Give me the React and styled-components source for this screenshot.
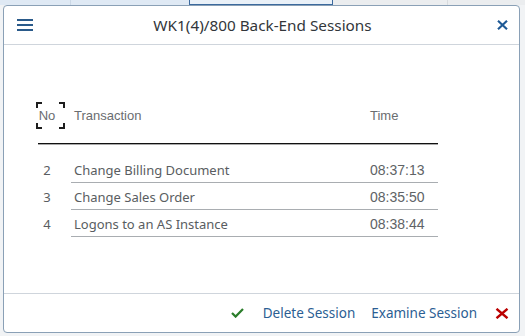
import React from "react";
import styled, { createGlobalStyle } from "styled-components";

const Global = createGlobalStyle`
  html, body { margin: 0; padding: 0; }
  body {
    background: #f1f3f5;
    font-family: "Noto Sans", "Open Sans", Arial, sans-serif;
    -webkit-font-smoothing: antialiased;
  }
`;

const Page = styled.div`
  width: 525px;
  height: 336px;
  display: flex;
  flex-direction: column;
  overflow: hidden;
  background: #f1f3f5;
`;

const TopStrip = styled.div`
  height: 5px;
  display: flex;
  flex-shrink: 0;
`;

const StripCell = styled.div`
  width: ${(p) => p.$w}px;
  flex: ${(p) => (p.$grow ? 1 : "none")};
  background: ${(p) => p.$bg};
  box-sizing: border-box;
  border-right: 1px solid ${(p) => p.$sep || "transparent"};
  ${(p) =>
    p.$active &&
    `border: 1px solid #3c6a9e; border-top: none; background: #eaf1f8;`}
`;

const Dialog = styled.div`
  flex: 1;
  margin: 0 5px 3px 3px;
  background: #fff;
  border: 1px solid #8aa0b6;
  border-radius: 4px;
  display: flex;
  flex-direction: column;
  overflow: hidden;
`;

const Header = styled.header`
  height: 38px;
  flex-shrink: 0;
  border-bottom: 1px solid #cfd5dc;
  display: grid;
  grid-template-columns: 1fr auto 1fr;
  align-items: center;
  padding: 0 11px 0 13px;
`;

const IconButton = styled.button`
  border: none;
  background: none;
  padding: 0;
  width: ${(p) => p.$w}px;
  height: ${(p) => p.$h}px;
  display: flex;
  justify-self: ${(p) => p.$align};
  cursor: pointer;
  svg { display: block; }
`;

const Title = styled.h1`
  margin: 0;
  font-size: 15.3px;
  font-weight: 400;
  color: #32363a;
  white-space: nowrap;
`;

const Content = styled.div`
  flex: 1;
  padding: 56px 0 0 32px;
`;

const Table = styled.div`
  width: 402px;
`;

const HeadRow = styled.div`
  display: grid;
  grid-template-columns: 35px 1fr 68px;
  height: 29px;
  align-items: center;
  font-family: "Liberation Sans", Arial, sans-serif;
  font-size: 13px;
  color: #6a6d70;
`;

const HeadCell = styled.div`
  position: relative;
  height: 100%;
  display: flex;
  align-items: center;
  justify-content: ${(p) => (p.$center ? "center" : "flex-start")};
  padding: ${(p) => p.$pad || "0"};
`;

const FocusFrame = styled.span`
  position: absolute;
  left: 0;
  top: 1px;
  width: 29px;
  height: 27px;
  pointer-events: none;
  --c: #1d1d1d;
  background:
    linear-gradient(var(--c), var(--c)) left top / 6px 2px,
    linear-gradient(var(--c), var(--c)) left top / 2px 6px,
    linear-gradient(var(--c), var(--c)) right top / 6px 2px,
    linear-gradient(var(--c), var(--c)) right top / 2px 6px,
    linear-gradient(var(--c), var(--c)) left bottom / 6px 2px,
    linear-gradient(var(--c), var(--c)) left bottom / 2px 6px,
    linear-gradient(var(--c), var(--c)) right bottom / 6px 2px,
    linear-gradient(var(--c), var(--c)) right bottom / 2px 6px;
  background-repeat: no-repeat;
`;

const HeadRule = styled.div`
  height: 1px;
  margin: 13px 0 12px 2px;
  background: #111;
  box-shadow: 0 0.5px 0 #555;
`;

const Row = styled.div`
  display: grid;
  grid-template-columns: 35px 1fr 68px;
  height: 27px;
  font-size: 13px;
  color: #595d61;
`;

const Cell = styled.div`
  display: flex;
  align-items: center;
  padding: ${(p) => p.$pad || "0"};
  padding-top: 2px;
  justify-content: ${(p) => (p.$center ? "center" : "flex-start")};
  border-bottom: ${(p) => (p.$lined ? "1px solid #a9adb1" : "1px solid transparent")};
  white-space: nowrap;
  font-family: ${(p) =>
    p.$mono ? `"Liberation Sans", Arial, sans-serif` : "inherit"};
  font-size: ${(p) => (p.$mono ? "14px" : "inherit")};
  color: ${(p) => (p.$mono ? "#606366" : "inherit")};
`;

const Footer = styled.footer`
  height: 38px;
  flex-shrink: 0;
  border-top: 1px solid #cfd5dc;
  display: flex;
  justify-content: flex-end;
  align-items: center;
  padding-right: 10px;
  gap: 16px;
`;

const TextButton = styled.button`
  border: none;
  background: none;
  padding: 0;
  font-family: "Noto Sans", "Open Sans", Arial, sans-serif;
  font-size: 13.5px;
  color: #2b5e93;
  cursor: pointer;
  white-space: nowrap;
`;

const FooterIcon = styled.button`
  border: none;
  background: none;
  padding: 0;
  display: flex;
  margin-top: ${(p) => p.$mt || 0}px;
  margin-right: ${(p) => p.$mr || 0}px;
  margin-left: ${(p) => p.$ml || 0}px;
  svg { display: block; }
`;

const rows = [
  { no: 2, tx: "Change Billing Document", time: "08:37:13" },
  { no: 3, tx: "Change Sales Order", time: "08:35:50" },
  { no: 4, tx: "Logons to an AS Instance", time: "08:38:44" },
];

export default function App() {
  return (
    <>
      <Global />
      <Page>
        <TopStrip>
          <StripCell $w={71} $bg="#dfe9f4" $sep="#cbd8e6" />
          <StripCell $w={118} $bg="#dfe9f4" />
          <StripCell $w={144} $active />
          <StripCell $w={115} $bg="#ebedef" $sep="#d8dbde" />
          <StripCell $grow $bg="#ebedef" />
        </TopStrip>
        <Dialog>
          <Header>
            <IconButton $w={16} $h={12} $align="start" aria-label="Menu">
              <svg width="16" height="12" viewBox="0 0 16 12">
                <rect x="0" y="0" width="16" height="2" fill="#2a5a8a" />
                <rect x="0" y="5" width="16" height="2" fill="#2a5a8a" />
                <rect x="0" y="10" width="16" height="2" fill="#2a5a8a" />
              </svg>
            </IconButton>
            <Title>WK1(4)/800 Back-End Sessions</Title>
            <IconButton $w={11} $h={10} $align="end" aria-label="Close">
              <svg width="11" height="10" viewBox="0 0 11 10">
                <path d="M1 0.8 L10 9.2 M10 0.8 L1 9.2" stroke="#1f5a96" strokeWidth="2.2" fill="none" />
              </svg>
            </IconButton>
          </Header>
          <Content>
            <Table>
              <HeadRow>
                <HeadCell $center $pad="0 13px 0 0">
                  No
                  <FocusFrame />
                </HeadCell>
                <HeadCell $pad="0 0 0 3px">Transaction</HeadCell>
                <HeadCell>Time</HeadCell>
              </HeadRow>
              <HeadRule />
              {rows.map((r) => (
                <Row key={r.no}>
                  <Cell $center $pad="0 13px 0 0">{r.no}</Cell>
                  <Cell $lined $pad="0 0 0 3px">{r.tx}</Cell>
                  <Cell $lined $mono>{r.time}</Cell>
                </Row>
              ))}
            </Table>
          </Content>
          <Footer>
            <FooterIcon aria-label="Accept" $mr={3}>
              <svg width="13" height="10" viewBox="0 0 13 10">
                <path d="M1 5 L4.6 8.6 L12 1" stroke="#2b7d2b" strokeWidth="2.2" fill="none" />
              </svg>
            </FooterIcon>
            <TextButton>Delete Session</TextButton>
            <TextButton>Examine Session</TextButton>
            <FooterIcon aria-label="Cancel" $mt={1} $ml={2}>
              <svg width="14" height="11" viewBox="0 0 14 11">
                <path d="M1.5 0.8 L12.5 10.2 M12.5 0.8 L1.5 10.2" stroke="#bb0000" strokeWidth="2.4" fill="none" />
              </svg>
            </FooterIcon>
          </Footer>
        </Dialog>
      </Page>
    </>
  );
}
